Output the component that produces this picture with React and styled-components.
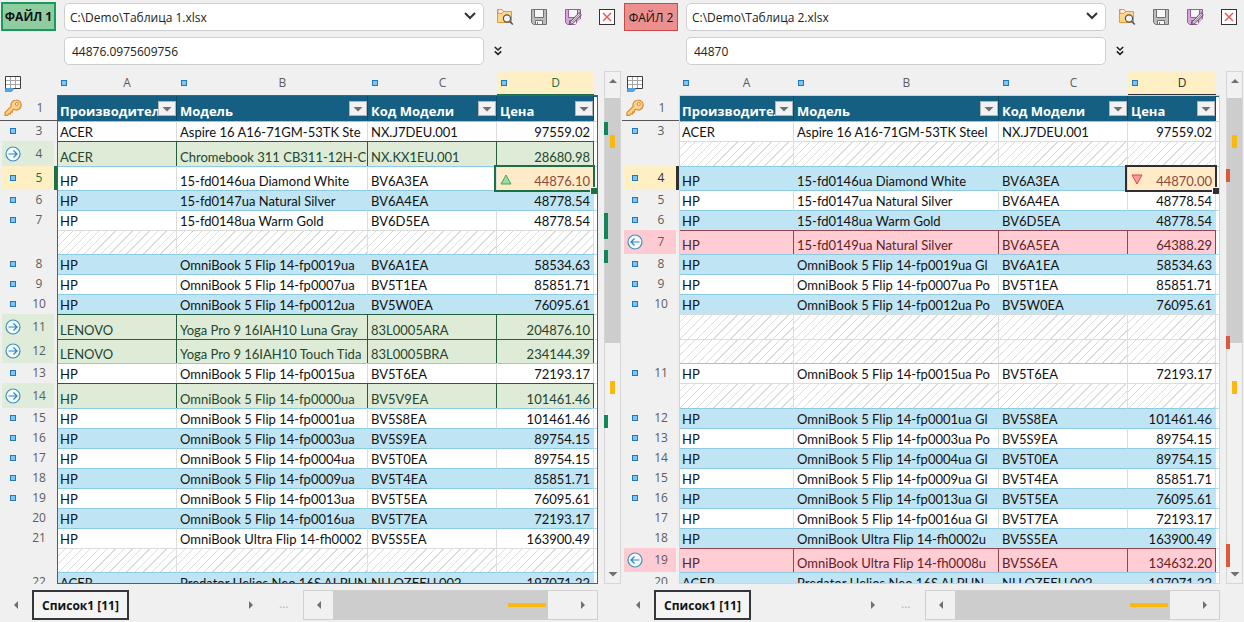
import { styled, createGlobalStyle, css } from "styled-components"

const leftSheet = {
    id: 1,
    path: "C:\\Demo\\Таблица 1.xlsx",
    value: "44876.0975609756",
    widths: [120, null, 129, 97],
    accent: "#1b7145",
    frame: "#1b7f52",
    rows: [
        { n: 3, kind: "plain", mark: "dot", cells: ["ACER", "Aspire 16 A16-71GM-53TK Ste", "NX.J7DEU.001", "97559.02"] },
        { n: 4, kind: "added", size: 25, mark: "right", cells: ["ACER", "Chromebook 311 CB311-12H-C", "NX.KX1EU.001", "28680.98"] },
        { n: 5, kind: "plain", size: 24, mark: "dot", current: "up", cells: ["HP", "15-fd0146ua Diamond White", "BV6A3EA", "44876.10"] },
        { n: 6, kind: "band", mark: "dot", cells: ["HP", "15-fd0147ua Natural Silver", "BV6A4EA", "48778.54"] },
        { n: 7, kind: "plain", mark: "dot", cells: ["HP", "15-fd0148ua Warm Gold", "BV6D5EA", "48778.54"] },
        { kind: "missing", size: 24 },
        { n: 8, kind: "band", mark: "dot", cells: ["HP", "OmniBook 5 Flip 14-fp0019ua", "BV6A1EA", "58534.63"] },
        { n: 9, kind: "plain", mark: "dot", cells: ["HP", "OmniBook 5 Flip 14-fp0007ua", "BV5T1EA", "85851.71"] },
        { n: 10, kind: "band", mark: "dot", cells: ["HP", "OmniBook 5 Flip 14-fp0012ua", "BV5W0EA", "76095.61"] },
        { n: 11, kind: "added", size: 25, mark: "right", cells: ["LENOVO", "Yoga Pro 9 16IAH10 Luna Gray", "83L0005ARA", "204876.10"] },
        { n: 12, kind: "added", size: 24, mark: "right", cells: ["LENOVO", "Yoga Pro 9 16IAH10 Touch Tida", "83L0005BRA", "234144.39"] },
        { n: 13, kind: "plain", mark: "dot", cells: ["HP", "OmniBook 5 Flip 14-fp0015ua", "BV5T6EA", "72193.17"] },
        { n: 14, kind: "added", size: 25, mark: "right", cells: ["HP", "OmniBook 5 Flip 14-fp0000ua", "BV5V9EA", "101461.46"] },
        { n: 15, kind: "plain", mark: "dot", cells: ["HP", "OmniBook 5 Flip 14-fp0001ua", "BV5S8EA", "101461.46"] },
        { n: 16, kind: "band", mark: "dot", cells: ["HP", "OmniBook 5 Flip 14-fp0003ua", "BV5S9EA", "89754.15"] },
        { n: 17, kind: "plain", mark: "dot", cells: ["HP", "OmniBook 5 Flip 14-fp0004ua", "BV5T0EA", "89754.15"] },
        { n: 18, kind: "band", mark: "dot", cells: ["HP", "OmniBook 5 Flip 14-fp0009ua", "BV5T4EA", "85851.71"] },
        { n: 19, kind: "plain", mark: "dot", cells: ["HP", "OmniBook 5 Flip 14-fp0013ua", "BV5T5EA", "76095.61"] },
        { n: 20, kind: "band", cells: ["HP", "OmniBook 5 Flip 14-fp0016ua", "BV5T7EA", "72193.17"] },
        { n: 21, kind: "plain", cells: ["HP", "OmniBook Ultra Flip 14-fh0002", "BV5S5EA", "163900.49"] },
        { kind: "missing", size: 24 },
        { n: 22, kind: "band", cells: ["ACER", "Predator Helios Neo 16S AI PHN", "NH.QZEEU.002", "197071.22"] },
    ],
    marks: [
        { top: 50, size: 13, color: "#12855a" },
        { top: 63, size: 13, color: "#fbb90f", inner: true },
        { top: 141, size: 26, color: "#12855a" },
        { top: 178, size: 13, color: "#12855a" },
        { top: 309, size: 13, color: "#fbb90f", inner: true },
        { top: 343, size: 13, color: "#12855a" },
    ],
}

const rightSheet = {
    id: 2,
    path: "C:\\Demo\\Таблица 2.xlsx",
    value: "44870",
    widths: [115, null, 129, 88],
    accent: "#2f2f33",
    frame: "#d3d3d3",
    rows: [
        { n: 3, kind: "plain", mark: "dot", cells: ["ACER", "Aspire 16 A16-71GM-53TK Steel", "NX.J7DEU.001", "97559.02"] },
        { kind: "missing", size: 25 },
        { n: 4, kind: "band", size: 24, mark: "dot", current: "down", cells: ["HP", "15-fd0146ua Diamond White", "BV6A3EA", "44870.00"] },
        { n: 5, kind: "plain", mark: "dot", cells: ["HP", "15-fd0147ua Natural Silver", "BV6A4EA", "48778.54"] },
        { n: 6, kind: "band", mark: "dot", cells: ["HP", "15-fd0148ua Warm Gold", "BV6D5EA", "48778.54"] },
        { n: 7, kind: "removed", size: 24, mark: "left", cells: ["HP", "15-fd0149ua Natural Silver", "BV6A5EA", "64388.29"] },
        { n: 8, kind: "band", mark: "dot", cells: ["HP", "OmniBook 5 Flip 14-fp0019ua Gl", "BV6A1EA", "58534.63"] },
        { n: 9, kind: "plain", mark: "dot", cells: ["HP", "OmniBook 5 Flip 14-fp0007ua Po", "BV5T1EA", "85851.71"] },
        { n: 10, kind: "band", mark: "dot", cells: ["HP", "OmniBook 5 Flip 14-fp0012ua Po", "BV5W0EA", "76095.61"] },
        { kind: "missing", size: 25 },
        { kind: "missing", size: 24 },
        { n: 11, kind: "plain", mark: "dot", cells: ["HP", "OmniBook 5 Flip 14-fp0015ua Po", "BV5T6EA", "72193.17"] },
        { kind: "missing", size: 25 },
        { n: 12, kind: "band", mark: "dot", cells: ["HP", "OmniBook 5 Flip 14-fp0001ua Gl", "BV5S8EA", "101461.46"] },
        { n: 13, kind: "plain", mark: "dot", cells: ["HP", "OmniBook 5 Flip 14-fp0003ua Po", "BV5S9EA", "89754.15"] },
        { n: 14, kind: "band", mark: "dot", cells: ["HP", "OmniBook 5 Flip 14-fp0004ua Gl", "BV5T0EA", "89754.15"] },
        { n: 15, kind: "plain", mark: "dot", cells: ["HP", "OmniBook 5 Flip 14-fp0009ua Gl", "BV5T4EA", "85851.71"] },
        { n: 16, kind: "band", mark: "dot", cells: ["HP", "OmniBook 5 Flip 14-fp0013ua Gl", "BV5T5EA", "76095.61"] },
        { n: 17, kind: "plain", cells: ["HP", "OmniBook 5 Flip 14-fp0016ua Gl", "BV5T7EA", "72193.17"] },
        { n: 18, kind: "band", cells: ["HP", "OmniBook Ultra Flip 14-fh0002u", "BV5S5EA", "163900.49"] },
        { n: 19, kind: "removed", size: 24, mark: "left", cells: ["HP", "OmniBook Ultra Flip 14-fh0008u", "BV5S6EA", "134632.20"] },
        { n: 20, kind: "band", cells: ["ACER", "Predator Helios Neo 16S AI PHN", "NH.QZEEU.002", "197071.22"] },
    ],
    marks: [
        { top: 63, size: 13, color: "#fbb90f", inner: true },
        { top: 97, size: 13, color: "#dc5a3c" },
        { top: 264, size: 13, color: "#dc5a3c" },
        { top: 309, size: 13, color: "#fbb90f", inner: true },
        { top: 472, size: 23, color: "#dc5a3c" },
    ],
}

const letters = ["A", "B", "C", "D"]
const titles = ["Производитель", "Модель", "Код Модели", "Цена"]

const kinds = {
    plain: { bg: "#ffffff", line: "#8ccbe3", side: "#dcdcdc", ink: "#111111" },
    band: { bg: "#bfe5f4", line: "#8ccbe3", side: "#bfe5f4", ink: "#111111" },
    added: { bg: "#deebd6", line: "#235f3f", side: "#235f3f", ink: "#24452f", head: "#dfecd9" },
    removed: { bg: "#ffcdd3", line: "#94454f", side: "#94454f", ink: "#5b2327", head: "#ffcbd3" },
    missing: { bg: "#ffffff", line: "#d9dedb", side: "#dcdfdd", ink: "#111111" },
}

export default function App() {
    return (
        <>
            <GlobalStyle />
            <Page>
                <Pane sheet={leftSheet} />
                <Pane sheet={rightSheet} />
            </Page>
        </>
    )
}

function Pane({ sheet }) {
    return (
        <PaneBox>
            <Head>
                <FileLabel htmlFor={"path" + sheet.id} $second={sheet.id === 2}>ФАЙЛ {sheet.id}</FileLabel>
                <SelectWrap>
                    <PathSelect id={"path" + sheet.id} defaultValue={sheet.path}>
                        <option>{sheet.path}</option>
                    </PathSelect>
                    <Chevron />
                </SelectWrap>
                <Tools>
                    <IconButton aria-label="Открыть"><FolderIcon /></IconButton>
                    <IconButton aria-label="Сохранить"><SaveIcon /></IconButton>
                    <IconButton aria-label="Сохранить как"><SaveIcon edit /></IconButton>
                    <IconButton aria-label="Закрыть"><CloseIcon /></IconButton>
                </Tools>
                <ValueInput aria-label="Значение ячейки" defaultValue={sheet.value} />
                <ExpandButton aria-label="Развернуть"><DoubleChevron /></ExpandButton>
            </Head>
            <Middle>
                <Viewport>
                    <Grid>
                        <colgroup>
                            <Col $w={57} />
                            {sheet.widths.map((w, i) => <Col key={i} $w={w} />)}
                            <Col $w={4} />
                        </colgroup>
                        <thead>
                            <tr>
                                <Corner><GutterBox><SheetIcon /></GutterBox></Corner>
                                {letters.map((letter) => (
                                    <LetterCell key={letter} $accent={letter === "D" ? sheet.accent : null}>
                                        <LetterBox><Dot /><span>{letter}</span></LetterBox>
                                    </LetterCell>
                                ))}
                                <Corner />
                            </tr>
                            <tr>
                                <KeyCell><GutterBox><KeyIcon /><span>1</span></GutterBox></KeyCell>
                                {titles.map((title) => (
                                    <TitleCell key={title}>
                                        <CellText>{title}</CellText>
                                        <FilterButton aria-label={"Фильтр: " + title}><Triangle dir="down" /></FilterButton>
                                    </TitleCell>
                                ))}
                                <Filler $line="#156082" />
                            </tr>
                        </thead>
                        <tbody>
                            {sheet.rows.map((row, i) => <SheetRow key={i} row={row} accent={sheet.accent} />)}
                        </tbody>
                    </Grid>
                    <Frame $color={sheet.frame} />
                </Viewport>
                <VScroll>
                    <ScrollButton aria-label="Вверх"><Triangle dir="up" /></ScrollButton>
                    <VThumb />
                    <VRest />
                    <ScrollButton $bare aria-label="Вниз"><Triangle dir="down" /></ScrollButton>
                    {sheet.marks.map((m) => (
                        <Mark key={m.top} $inner={m.inner} style={{ top: m.top, height: m.size, background: m.color }} />
                    ))}
                </VScroll>
            </Middle>
            <Bottom>
                <NavButton aria-label="Предыдущий лист"><Triangle dir="left" /></NavButton>
                <SheetTab>Список1 [11]</SheetTab>
                <Spacer />
                <NavButton aria-label="Следующий лист"><Triangle dir="right" /></NavButton>
                <Dots>...</Dots>
                <HScroll>
                    <HButton aria-label="Влево"><Triangle dir="left" /></HButton>
                    <HThumb><HMark /></HThumb>
                    <HRest />
                    <HButton aria-label="Вправо"><Triangle dir="right" /></HButton>
                </HScroll>
            </Bottom>
        </PaneBox>
    )
}

function SheetRow({ row, accent }) {
    const kind = kinds[row.kind]
    const cells = row.cells || ["", "", "", ""]
    return (
        <Row $size={row.size || 20}>
            <RowHead $bg={row.current ? "#ffefc4" : kind.head} $accent={row.current ? accent : null}>
                <GutterBox $ink={row.current ? accent : null}>
                    {row.mark === "dot" && <Dot />}
                    {(row.mark === "left" || row.mark === "right") && <ArrowIcon dir={row.mark} />}
                    <span>{row.n}</span>
                </GutterBox>
            </RowHead>
            {cells.map((text, i) => {
                const current = row.current && i === 3
                return (
                    <Cell key={i} $kind={kind} $hatch={row.kind === "missing"} $num={i === 3} $current={current}>
                        <CellText>{text}</CellText>
                        {current && (
                            <Selection $color={accent}>
                                <TrendIcon dir={row.current} />
                                <Handle $color={accent} />
                            </Selection>
                        )}
                    </Cell>
                )
            })}
            <Filler $line={row.kind === "band" || row.kind === "plain" ? "#b5dcea" : "#d9dedb"} />
        </Row>
    )
}

function Triangle({ dir }) {
    const paths = {
        up: "M1 7 L5 3 L9 7Z",
        down: "M0.5 3 H9.5 L5 7.5Z",
        left: "M7 1 L3 5 L7 9Z",
        right: "M3 1 L7 5 L3 9Z",
    }
    return <svg width="10" height="10" viewBox="0 0 10 10"><path d={paths[dir]} fill="#707070" /></svg>
}

function Chevron() {
    return (
        <ChevronSvg width="12" height="8" viewBox="0 0 12 8">
            <path d="M1 1 L6 6 L11 1" fill="none" stroke="#333" strokeWidth="2" />
        </ChevronSvg>
    )
}

function DoubleChevron() {
    return (
        <svg width="8" height="10" viewBox="0 0 8 10">
            <path d="M0.8 1 L4 4 L7.2 1 M0.8 5.4 L4 8.4 L7.2 5.4" fill="none" stroke="#222" strokeWidth="1.6" />
        </svg>
    )
}

function FolderIcon() {
    return (
        <svg width="18" height="18" viewBox="0 0 18 18">
            <path d="M1.5 14.5 V1.5 H6 L7.5 3.5 H15.5 V14.5Z" fill="#ffd68a" stroke="#e39a35" />
            <path d="M2 1.6 H6 L7.5 3.4 L6 5.4 H2Z" fill="#fff8f4" stroke="#e07c4c" strokeWidth="0.8" />
            <circle cx="11" cy="10.5" r="3.6" fill="#f1f4f6" stroke="#555" strokeWidth="1.2" />
            <path d="M13.6 13.2 L16.8 16.6" stroke="#555" strokeWidth="1.5" />
        </svg>
    )
}

function SaveIcon({ edit }) {
    const ink = edit ? "#9c5aa0" : "#707070"
    const fill = edit ? "#d8a8dc" : "#bcbcbc"
    return (
        <svg width="18" height="18" viewBox="0 0 18 18">
            <path d="M1.5 1.5 H16.5 V16.5 H3.5 L1.5 14.5Z" fill={fill} stroke={ink} />
            <path d="M4.5 1.5 H13.5 V9.5 H4.5Z" fill="#f7f7f7" stroke={ink} />
            <path d="M5.5 16.5 V12.5 H12.5 V16.5Z" fill="#f7f7f7" stroke={ink} />
            <path d="M7.5 14 V16" stroke={ink} />
            {edit && (
                <>
                    <path d="M10.5 17.5 L17.5 10 V18 H10.5Z" fill="#f0f0f0" />
                    <path d="M5.6 16.6 L6.6 13.4 L15 4.6 L17.4 6.8 L8.8 15.6Z" fill="#dcdcdc" stroke="#505050" />
                    <path d="M8 14.4 L16 6" stroke="#777" strokeWidth="0.8" />
                </>
            )}
        </svg>
    )
}

function CloseIcon() {
    return (
        <svg width="18" height="18" viewBox="0 0 18 18">
            <rect x="1.5" y="1.5" width="15" height="15" fill="#fff" stroke="#333" />
            <path d="M5 5 L13 13 M13 5 L5 13" stroke="#f05050" strokeWidth="1.4" />
        </svg>
    )
}

function SheetIcon() {
    return (
        <svg width="16" height="16" viewBox="0 0 16 16">
            <rect x="0.5" y="0.5" width="15" height="12" fill="#fff" />
            <path d="M5.5 1 V12 M10.5 1 V12 M1 4.5 H15 M1 8.5 H15" stroke="#a4a4a4" />
            <path d="M0.5 13 V0.5 H15.5 V12.5 H8" fill="none" stroke="#3c3c3c" />
            <path d="M0 15.5 V12.5 H7.5 L9 12.5 L6.5 15.5Z" fill="#4fa9e6" stroke="#1d7fc4" strokeWidth="0.6" />
        </svg>
    )
}

function KeyIcon() {
    return (
        <svg width="18" height="18" viewBox="0 0 18 18">
            <path
                d="M12 1 A5 5 0 1 1 9.6 10.3 L8.3 11.6 V13.2 H6.6 V14.9 H4.9 L3.4 16.4 H1 V13.6 L7.2 7.4 A5 5 0 0 1 12 1Z"
                fill="#ffd08a"
                stroke="#db8b30"
                strokeWidth="1.2"
            />
            <circle cx="12.8" cy="5" r="1.5" fill="#fff" stroke="#db8b30" />
        </svg>
    )
}

function ArrowIcon({ dir }) {
    return (
        <svg width="16" height="16" viewBox="0 0 16 16">
            <circle cx="8" cy="8" r="7" fill="#f4fbff" stroke="#3f8fc0" strokeWidth="1.2" />
            {dir === "right"
                ? <path d="M3.5 8 H12 M8.5 4.5 L12 8 L8.5 11.5" fill="none" stroke="#2f82b8" strokeWidth="1.2" />
                : <path d="M12.5 8 H4 M7.5 4.5 L4 8 L7.5 11.5" fill="none" stroke="#2f82b8" strokeWidth="1.2" />}
        </svg>
    )
}

function TrendIcon({ dir }) {
    return (
        <svg width="12" height="11" viewBox="0 0 12 11">
            {dir === "up"
                ? <path d="M6 1 L11 10 H1Z" fill="#98dba3" stroke="#47a45c" />
                : <path d="M1 1 H11 L6 10Z" fill="#ff9c9c" stroke="#e0433f" />}
        </svg>
    )
}

const GlobalStyle = createGlobalStyle`
    * {
        box-sizing: border-box;
    }

    body {
        margin: 0;
        background-color: #f0f0f0;
        font-family: "Open Sans", "Noto Sans", sans-serif;
        font-size: 12px;
        color: #222;
    }

    button, select, input {
        margin: 0;
        font-family: inherit;
        font-size: inherit;
        color: inherit;
    }

    svg {
        display: block;
        flex: none;
    }
`
const Page = styled.main`
    display: flex;
    height: 100vh;
`
const PaneBox = styled.section`
    flex: 1;
    min-width: 0;
    display: flex;
    flex-direction: column;
`
const Head = styled.div`
    display: grid;
    grid-template-columns: 56px minmax(0, 1fr) 130px;
    grid-template-rows: 28px 28px;
    gap: 6px 8px;
    padding: 3px 0 6px 0;
`
const FileLabel = styled.label`
    display: flex;
    align-items: center;
    justify-content: center;
    white-space: nowrap;
    margin-left: ${({ $second }) => $second ? 2 : 1}px;
    margin-top: ${({ $second }) => $second ? 0 : -1}px;
    font-weight: ${({ $second }) => $second ? 400 : 700};
    color: #111;
    background-color: ${({ $second }) => $second ? "#ec8f8f" : "#8fcc9f"};
    border: ${({ $second }) => $second ? "1px solid #c94a4a" : "2px solid #1a9a5c"};
`
const SelectWrap = styled.div`
    position: relative;
`
const field = css`
    width: 100%;
    height: 28px;
    border: 1px solid #cfcfcf;
    border-radius: 5px;
    background-color: white;
    outline: none;
`
const PathSelect = styled.select`
    ${field}
    appearance: none;
    padding: 0 28px 0 5px;
`
const ChevronSvg = styled.svg`
    position: absolute;
    right: 8px;
    top: 9px;
    pointer-events: none;
`
const ValueInput = styled.input`
    ${field}
    grid-column: 2;
    padding: 0 7px;
`
const Tools = styled.div`
    display: flex;
    align-items: center;
    gap: 16px;
    padding-left: 4px;
`
const IconButton = styled.button`
    padding: 0;
    border: none;
    background: none;
`
const ExpandButton = styled(IconButton)`
    justify-self: start;
    padding: 0 2px;
`
const Middle = styled.div`
    flex: 1;
    min-height: 0;
    display: flex;
    gap: 6px;
    padding-right: 1px;
`
const Viewport = styled.div`
    position: relative;
    flex: 1;
    min-width: 0;
    overflow: hidden;
`
const Grid = styled.table`
    width: 100%;
    table-layout: fixed;
    border-collapse: separate;
    border-spacing: 0;

    th, td {
        padding: 0;
    }
`
const Col = styled.col`
    width: ${({ $w }) => $w ? $w + "px" : "auto"};
`
const Corner = styled.th`
    height: 25px;
`
const GutterBox = styled.div`
    display: grid;
    grid-template-columns: 26px 28px;
    align-items: center;
    justify-items: center;
    font-weight: 400;
    line-height: 16px;
    color: ${({ $ink }) => $ink || "#5c5c5c"};

    span {
        grid-column: 2;
    }
`
const LetterCell = styled.th`
    font-weight: 400;
    color: ${({ $accent }) => $accent || "#5c5c5c"};
    background-color: ${({ $accent }) => $accent ? "#ffefc4" : "transparent"};
    border-bottom: 2px solid ${({ $accent }) => $accent || "transparent"};
`
const LetterBox = styled.div`
    display: flex;
    align-items: center;
    gap: 10px;
    padding-left: 4px;

    span {
        flex: 1;
    }
`
const Dot = styled.i`
    width: 6px;
    height: 6px;
    background-color: #7cc6f5;
    border: 1px solid #1f78b8;
`
const KeyCell = styled.th`
    height: 25px;
    border-bottom: 1px solid #555;
`
const TitleCell = styled.th`
    position: relative;
    vertical-align: bottom;
    color: white;
    background-color: #156082;
    border-right: 1px solid #104b66;
    border-bottom: 1px solid #156082;
`
const CellText = styled.div`
    height: 18px;
    line-height: 18px;
    padding: 0 3px;
    overflow: hidden;
    white-space: nowrap;
    text-align: inherit;
    font-family: Lato, "Open Sans", sans-serif;
    font-size: 13px;

    ${TitleCell} & {
        text-align: left;
        font-family: "Open Sans", sans-serif;
    }
`
const FilterButton = styled.button`
    position: absolute;
    right: 0;
    top: 5px;
    width: 18px;
    height: 15px;
    padding: 0;
    display: flex;
    align-items: center;
    justify-content: center;
    background-color: #f2f2f4;
    border: 1px solid #b4b4b4;
`
const Row = styled.tr`
    height: ${({ $size }) => $size}px;
`
const RowHead = styled.th`
    background-color: ${({ $bg }) => $bg || "transparent"};
    background-clip: padding-box;
    border-left: 2px solid transparent;
    border-right: 3px solid ${({ $accent }) => $accent || "transparent"};

    ${GutterBox} {
        grid-template-columns: 22px 30px;
    }
`
const Cell = styled.td`
    position: relative;
    vertical-align: bottom;
    text-align: ${({ $num }) => $num ? "right" : "left"};
    color: ${({ $kind, $current }) => $current ? "#8c4a3c" : $kind.ink};
    background-color: ${({ $kind, $current }) => $current ? "#ffebc8" : $kind.bg};
    border-top: 1px solid ${({ $kind }) => $kind.line};
    border-right: 1px solid ${({ $kind }) => $kind.side};
    ${({ $hatch }) => $hatch && css`
        background-image: repeating-linear-gradient(135deg, transparent 0 5px, #dadddb 5px 6px);
    `}
`
const Filler = styled.td`
    background-color: white;
    border-top: 1px solid ${({ $line }) => $line};
`
const Selection = styled.div`
    position: absolute;
    inset: -2px -2px -2px -3px;
    z-index: 1;
    padding: 7px 4px;
    border: 2px solid ${({ $color }) => $color};
`
const Handle = styled.i`
    position: absolute;
    right: -4px;
    bottom: -4px;
    width: 7px;
    height: 7px;
    background-color: ${({ $color }) => $color};
    border: solid white;
    border-width: 1px 0 0 1px;
`
const Frame = styled.div`
    position: absolute;
    inset: 24px 0 0 57px;
    border: 1px solid ${({ $color }) => $color};
    pointer-events: none;
`
const VScroll = styled.div`
    position: relative;
    width: 17px;
    display: flex;
    flex-direction: column;
    border: 1px solid #d6d6d6;
    background-color: #f1f1f1;
`
const ScrollButton = styled.button`
    height: ${({ $bare }) => $bare ? 18 : 26}px;
    padding: 0 0 ${({ $bare }) => $bare ? 0 : 8}px;
    display: flex;
    align-items: center;
    justify-content: center;
    background: none;
    border: none;
`
const VThumb = styled.div`
    flex: 245;
    background-color: #cdcdcd;
`
const VRest = styled.div`
    flex: 222;
`
const Mark = styled.i`
    position: absolute;
    left: ${({ $inner }) => $inner ? 5 : -1}px;
    width: ${({ $inner }) => $inner ? 5 : 4}px;
`
const Bottom = styled.div`
    display: flex;
    height: 38px;
    padding: 6px 24px 2px 0;
`
const NavButton = styled.button`
    width: 32px;
    padding: 0;
    display: flex;
    align-items: center;
    justify-content: center;
    background: none;
    border: none;
`
const SheetTab = styled.button`
    min-width: 97px;
    padding: 0 6px;
    font-weight: 700;
    color: #111;
    background-color: #f4f4f4;
    border: 2px solid #33363a;
`
const Spacer = styled.div`
    flex: 1;
`
const Dots = styled.span`
    width: 36px;
    line-height: 28px;
    padding-left: 12px;
    color: #b5b5b5;
`
const HScroll = styled.div`
    width: 295px;
    display: flex;
    border: 1px solid #d0d0d0;
    background-color: #f1f1f1;
`
const HButton = styled(NavButton)`
    width: 29px;
`
const HThumb = styled.div`
    flex: 214;
    display: flex;
    align-items: center;
    justify-content: flex-end;
    padding-right: 2px;
    background-color: #cdcdcd;
`
const HMark = styled.i`
    width: 38px;
    height: 4px;
    background-color: #fbb90f;
`
const HRest = styled.div`
    flex: 20;
`
